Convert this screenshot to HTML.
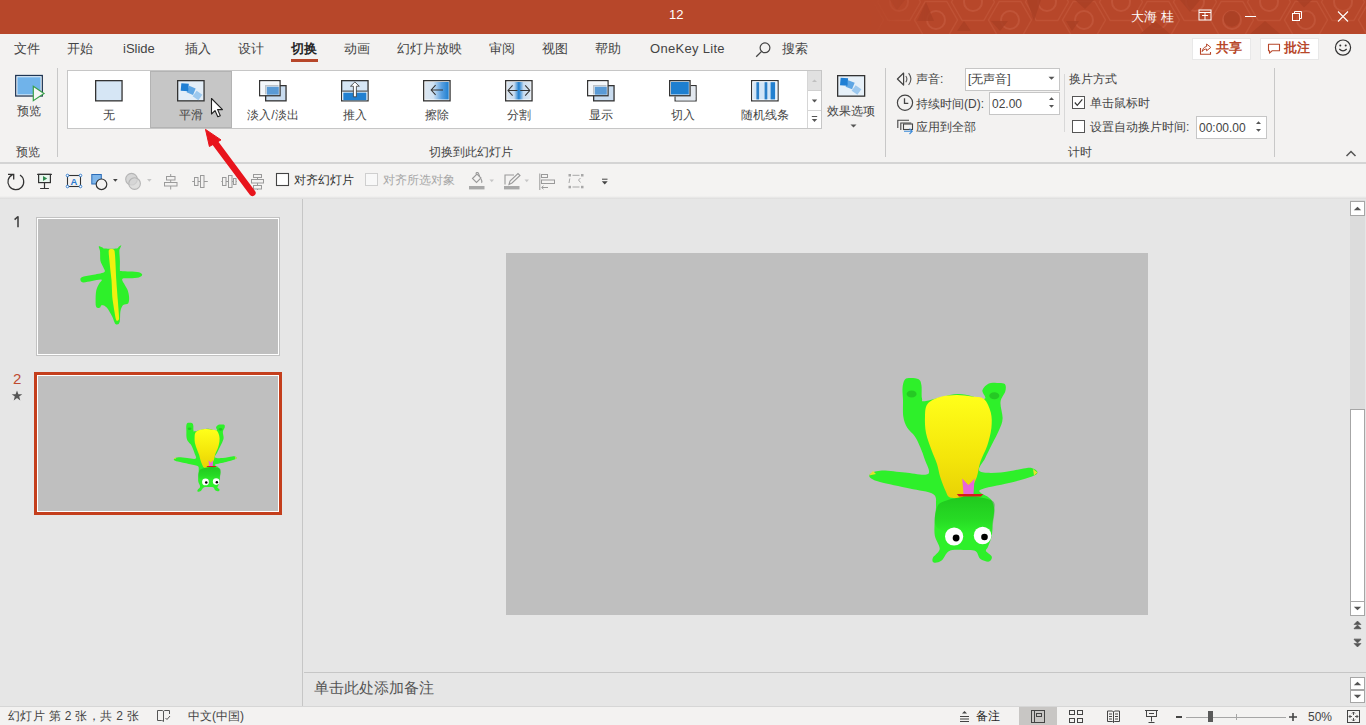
<!DOCTYPE html>
<html><head><meta charset="utf-8">
<style>
*{box-sizing:border-box;margin:0;padding:0}
html,body{width:1366px;height:725px;overflow:hidden;background:#e6e6e6;font-family:"Liberation Sans",sans-serif;color:#262626}
.a{position:absolute}
#title{left:0;top:0;width:1366px;height:34px;background:#b7472a}
#ribbon{left:0;top:34px;width:1366px;height:129px;background:#f3f2f1}
#tb{left:0;top:162px;width:1366px;height:37px;background:#f4f3f2;border-top:2px solid #d4d4d4;border-bottom:1px solid #cfcfcf}
.tab{position:absolute;top:41px;font-size:13px;color:#444;line-height:16px;white-space:nowrap}
.sep{position:absolute;width:1px;background:#c8c8c8}
.glabel{position:absolute;font-size:12px;color:#444;line-height:14px;white-space:nowrap;top:145px !important}
.gi{position:absolute;top:71px;width:82px;height:57px}
.gi .t{position:absolute;left:0;width:100%;top:37px;text-align:center;font-size:12px;color:#444;line-height:14px;white-space:nowrap}
.gi svg{position:absolute;left:27px;top:8px}
.txt{position:absolute;font-size:12px;color:#444;line-height:14px;white-space:nowrap}
</style></head><body>
<div id="title" class="a"></div>
<div id="ribbon" class="a"></div>
<div id="tb" class="a"></div>
<div class="a" style="left:0;top:196px;width:1366px;height:3px;background:linear-gradient(#f4f3f2,#dcdcdc)"></div>

<!-- tabs -->
<div class="tab" style="left:14px">文件</div>
<div class="tab" style="left:67px">开始</div>
<div class="tab" style="left:123px">iSlide</div>
<div class="tab" style="left:185px">插入</div>
<div class="tab" style="left:238px">设计</div>
<div class="tab" style="left:291px;font-weight:bold;color:#262626">切换</div>
<div class="a" style="left:291px;top:59px;width:27px;height:3px;background:#b7472a"></div>
<div class="tab" style="left:344px">动画</div>
<div class="tab" style="left:397px">幻灯片放映</div>
<div class="tab" style="left:489px">审阅</div>
<div class="tab" style="left:542px">视图</div>
<div class="tab" style="left:595px">帮助</div>
<div class="tab" style="left:650px;letter-spacing:0.3px">OneKey Lite</div>
<div class="tab" style="left:782px">搜索</div>

<!-- separators -->
<div class="sep" style="left:57px;top:68px;height:89px"></div>
<div class="sep" style="left:885px;top:68px;height:89px"></div>
<div class="sep" style="left:1274px;top:68px;height:89px"></div>
<div class="sep" style="left:1064px;top:74px;height:58px;background:#d8d8d8"></div>

<!-- group labels -->
<div class="glabel" style="left:16px;top:144px">预览</div>
<div class="glabel" style="left:429px;top:144px">切换到此幻灯片</div>
<div class="glabel" style="left:1068px;top:144px">计时</div>

<!-- gallery -->
<div class="a" style="left:67px;top:70px;width:755px;height:59px;background:#fff;border:1px solid #c6c6c6"></div>


<!-- preview button -->
<svg class="a" style="left:8px;top:70px" width="40" height="34" viewBox="8 70 40 34">
<rect x="15.7" y="75.5" width="26.6" height="20.5" fill="#fff" stroke="#1f3553" stroke-width="1.3"/>
<rect x="17" y="76.8" width="24" height="18" fill="#70b3ea"/>
<rect x="17.2" y="77" width="23.6" height="17.6" fill="none" stroke="#cfe6fa" stroke-width="0.6"/>
<path d="M33.3 86.3 L44 93.5 L33.3 100.7 Z" fill="#f6f6f6" stroke="#3aa14a" stroke-width="1.2" stroke-linejoin="miter"/>
</svg>
<div class="txt" style="left:17px;top:104px">预览</div>

<!-- gallery items -->
<div class="a" style="left:150px;top:71px;width:82px;height:57px;background:#c6c6c6;border:1px solid #b3b3b3"></div>
<div class="gi" style="left:68px"><svg width="28" height="22" viewBox="0 0 28 22" style="left:27px;top:9px"><rect x="0.65" y="0.65" width="26.40" height="20.20" fill="#d6e6f5" stroke="#333" stroke-width="1.3"/></svg><div class="t">无</div></div>
<div class="gi" style="left:150px"><svg width="28" height="22" viewBox="0 0 28 22" style="left:27px;top:9px"><rect x="0.65" y="0.65" width="26.40" height="20.20" fill="#e3eef8" stroke="#333" stroke-width="1.3"/><rect x="17" y="12" width="7" height="7" fill="#9cc8ee" transform="rotate(35 20.5 15.5)"/>
<rect x="10.6" y="6.8" width="7" height="7" fill="#5ea6e4" transform="rotate(22 14 10.3)"/>
<rect x="4" y="3.5" width="7.5" height="7.5" fill="#1f7fd4" transform="rotate(5 7.8 7.3)"/></svg><div class="t">平滑</div></div>
<div class="gi" style="left:232px"><svg width="28" height="22" viewBox="0 0 28 22" style="left:27px;top:9px"><rect x="6.65" y="5.65" width="20.40" height="15.20" fill="#c9dcef" stroke="#333" stroke-width="1.3"/><rect x="0.65" y="0.65" width="20.4" height="15.1" fill="#eef3f8" fill-opacity="0.75" stroke="#333" stroke-width="1.3"/><rect x="1.9" y="1.9" width="17.9" height="12.6" fill="none" stroke="#fff" stroke-width="0.9" opacity="0.7"/><rect x="7.8" y="6.8" width="12" height="7.9" fill="#5a9ad5"/></svg><div class="t">淡入/淡出</div></div>
<div class="gi" style="left:314px"><svg width="28" height="22" viewBox="0 0 28 22" style="left:27px;top:9px"><rect x="0.65" y="0.65" width="26.40" height="20.20" fill="#d6e6f5" stroke="#333" stroke-width="1.3"/><rect x="1.3" y="11.6" width="25.1" height="8.6" fill="#fff"/><rect x="2.3" y="12.6" width="23.1" height="7.6" fill="#2280d0"/><path d="M1.3 11.1 H26.4" stroke="#333" stroke-width="1"/><path d="M12.4 16.8 V6.2 H9.5 L13.9 2 L18.3 6.2 H15.4 V16.8 Z" fill="#fff" stroke="#333" stroke-width="0.8" stroke-linejoin="round"/></svg><div class="t">推入</div></div>
<div class="gi" style="left:396px"><svg width="28" height="22" viewBox="0 0 28 22" style="left:27px;top:9px"><defs><linearGradient id="gw" x1="0" x2="1"><stop offset="0" stop-color="#dce6f0"/><stop offset="0.35" stop-color="#d0e2f3"/><stop offset="0.7" stop-color="#5aa0e0"/><stop offset="1" stop-color="#1e7fd0"/></linearGradient></defs><rect x="0.65" y="0.65" width="26.40" height="20.20" fill="#fff" stroke="#333" stroke-width="1.3"/><rect x="2" y="2" width="23.7" height="17.5" fill="url(#gw)"/><path d="M20 10 H8.2 M12.6 5.2 L8.2 10 L12.6 14.8" fill="none" stroke="#333" stroke-width="1.05"/></svg><div class="t">擦除</div></div>
<div class="gi" style="left:478px"><svg width="28" height="22" viewBox="0 0 28 22" style="left:27px;top:9px"><defs><linearGradient id="gs" x1="0" x2="1"><stop offset="0" stop-color="#dce6f0"/><stop offset="0.3" stop-color="#c8dcf0"/><stop offset="0.5" stop-color="#1e7fd0"/><stop offset="0.7" stop-color="#c8dcf0"/><stop offset="1" stop-color="#dce6f0"/></linearGradient></defs><rect x="0.65" y="0.65" width="26.40" height="20.20" fill="#fff" stroke="#333" stroke-width="1.3"/><rect x="2" y="2" width="23.7" height="17.5" fill="url(#gs)"/><path d="M3 10.5 H12.5 M15.2 10.5 H24.8 M7.6 5.3 L3 10.5 L7.6 15.7 M20.2 5.3 L24.8 10.5 L20.2 15.7" fill="none" stroke="#333" stroke-width="1.05"/></svg><div class="t">分割</div></div>
<div class="gi" style="left:560px"><svg width="28" height="22" viewBox="0 0 28 22" style="left:27px;top:9px"><rect x="6.65" y="5.65" width="20.40" height="15.20" fill="#c9dcef" stroke="#333" stroke-width="1.3"/><rect x="0.65" y="0.65" width="20.4" height="15.1" fill="#eef3f8" fill-opacity="0.75" stroke="#333" stroke-width="1.3"/><rect x="1.9" y="1.9" width="17.9" height="12.6" fill="none" stroke="#fff" stroke-width="0.9" opacity="0.7"/><rect x="7.8" y="6.8" width="12" height="7.9" fill="#5a9ad5"/></svg><div class="t">显示</div></div>
<div class="gi" style="left:642px"><svg width="28" height="22" viewBox="0 0 28 22" style="left:27px;top:9px"><path d="M6.1 16.4 V21 H27.1 V5.6 H21.7" fill="#e6ebf0" stroke="#333" stroke-width="1.2"/><rect x="6.8" y="16.4" width="19.6" height="3.9" fill="#e2e8ef"/><rect x="21.7" y="6.3" width="4.7" height="10.5" fill="#e2e8ef"/><rect x="0.65" y="0.65" width="20.40" height="15.10" fill="#fff" stroke="#333" stroke-width="1.3"/><rect x="1.9" y="1.9" width="17.9" height="12.6" fill="#1e7fd0"/></svg><div class="t">切入</div></div>
<div class="gi" style="left:724px"><svg width="28" height="22" viewBox="0 0 28 22" style="left:27px;top:9px"><rect x="0.65" y="0.65" width="26.40" height="20.20" fill="#d6e6f5" stroke="#333" stroke-width="1.3"/><rect x="1.3" y="1.3" width="25.1" height="18.9" fill="#fff"/><rect x="2.2" y="2.2" width="23.3" height="17.2" fill="#d3e6f7"/><rect x="5.4" y="2.2" width="2.7" height="17.2" fill="#2a7fc8"/><rect x="13.6" y="2.2" width="2.7" height="17.2" fill="#2a7fc8"/><rect x="19.6" y="2.2" width="4.4" height="17.2" fill="#2280d0"/></svg><div class="t">随机线条</div></div>

<!-- gallery scroll -->
<div class="a" style="left:807px;top:71px;width:14px;height:57px;background:#fff;border-left:1px solid #d6d6d6"></div>
<div class="a" style="left:808px;top:71px;width:13px;height:20px;background:#e1e1e1;border-bottom:1px solid #d0d0d0"></div>
<div class="a" style="left:808px;top:110px;width:13px;height:1px;background:#d6d6d6"></div>
<svg class="a" style="left:808px;top:71px" width="13" height="57" viewBox="0 0 13 57">
<path d="M4 11 L9 11 L6.5 8.5Z" fill="#c0c0c0"/>
<path d="M3.8 28.5 L9.2 28.5 L6.5 31.5Z" fill="#555"/>
<rect x="3.8" y="45" width="5.4" height="1" fill="#555"/>
<path d="M3.8 48 L9.2 48 L6.5 51Z" fill="#555"/>
</svg>

<!-- effect options -->
<svg class="a" style="left:836px;top:74px" width="30" height="24" viewBox="0 0 30 24">
<rect x="1.65" y="1.65" width="27" height="20.5" fill="#e6f0f8" stroke="#333" stroke-width="1.3"/>
<rect x="17" y="12.5" width="7" height="7" fill="#9cc8ee" transform="rotate(35 20.5 16)"/>
<rect x="10.6" y="7.2" width="7" height="7" fill="#5ea6e4" transform="rotate(22 14 10.8)"/>
<rect x="4.3" y="4" width="7.5" height="7.5" fill="#1f7fd4" transform="rotate(5 8 7.8)"/>
</svg>
<div class="txt" style="left:827px;top:104px">效果选项</div>
<svg class="a" style="left:849px;top:123px" width="9" height="6" viewBox="0 0 9 6"><path d="M1.5 1.5 H7.5 L4.5 4.5Z" fill="#555"/></svg>

<!-- timing -->
<svg class="a" style="left:890px;top:68px" width="26" height="72" viewBox="890 68 26 72">
<path d="M903.6 73 L897.4 79 L903.6 85 Z" fill="none" stroke="#444" stroke-width="1.2" stroke-linejoin="round"/>
<path d="M905.8 76 Q908 79 905.8 82.2" fill="none" stroke="#555" stroke-width="1.1"/>
<path d="M908.6 73.2 Q913.2 79 908.6 85" fill="none" stroke="#555" stroke-width="1.1"/>
<circle cx="905" cy="102.8" r="7.6" fill="none" stroke="#444" stroke-width="1.2"/>
<path d="M904.5 98.2 V103.4 H908.3" fill="none" stroke="#444" stroke-width="1.3"/>
<path d="M897.8 128 V120.2 H909" fill="none" stroke="#444" stroke-width="1.1"/>
<path d="M900.8 130 V123 H911.3" fill="none" stroke="#444" stroke-width="1.1"/>
<rect x="903.5" y="124" width="9" height="5.5" fill="none" stroke="#444" stroke-width="1.1"/>
<path d="M904 131.3 H912 M909.5 128.6 L912.2 131.3 L909.5 134" fill="none" stroke="#3b8ad8" stroke-width="1.1"/>
</svg>
<div class="txt" style="left:916px;top:72px">声音:</div>
<div class="a" style="left:965px;top:68px;width:95px;height:23px;background:#fff;border:1px solid #c6c6c6"></div>
<div class="txt" style="left:968px;top:72px">[无声音]</div>
<svg class="a" style="left:1048px;top:76px" width="8" height="5" viewBox="0 0 8 5"><path d="M0.5 0.8 H6.5 L3.5 3.8Z" fill="#555"/></svg>


<div class="txt" style="left:916px;top:97px">持续时间(D):</div>
<div class="a" style="left:989px;top:92px;width:71px;height:23px;background:#fff;border:1px solid #c6c6c6"></div>
<div class="txt" style="left:992px;top:97px">02.00</div>
<svg class="a" style="left:1047px;top:94px" width="10" height="18" viewBox="0 0 10 18"><path d="M2 6 H7 L4.5 3.3Z M2 11 H7 L4.5 13.7Z" fill="#555"/></svg>


<div class="txt" style="left:916px;top:120px">应用到全部</div>

<div class="txt" style="left:1069px;top:72px">换片方式</div>
<div class="a" style="left:1072px;top:96px;width:13px;height:13px;background:#fff;border:1px solid #555"></div>
<svg class="a" style="left:1072px;top:96px" width="13" height="13" viewBox="0 0 13 13"><path d="M2.8 6.5 L5.3 9.3 L10.3 3.3" fill="none" stroke="#333" stroke-width="1.2"/></svg>
<div class="txt" style="left:1090px;top:96px">单击鼠标时</div>
<div class="a" style="left:1072px;top:120px;width:13px;height:13px;background:#fff;border:1px solid #555"></div>
<div class="txt" style="left:1090px;top:120px">设置自动换片时间:</div>
<div class="a" style="left:1196px;top:116px;width:71px;height:23px;background:#fff;border:1px solid #c6c6c6"></div>
<div class="txt" style="left:1199px;top:121px">00:00.00</div>
<svg class="a" style="left:1254px;top:118px" width="10" height="18" viewBox="0 0 10 18"><path d="M2 6 H7 L4.5 3.3Z M2 11 H7 L4.5 13.7Z" fill="#555"/></svg>

<svg class="a" style="left:1345px;top:149px" width="12" height="9" viewBox="0 0 12 9"><path d="M1.5 7 L6 2.5 L10.5 7" fill="none" stroke="#555" stroke-width="1.5"/></svg>

<!-- title pattern -->
<svg class="a" style="left:870px;top:0" width="496" height="34" viewBox="870 0 496 34"><defs><linearGradient id="fade" x1="0" x2="1"><stop offset="0" stop-color="#fff" stop-opacity="0"/><stop offset="0.12" stop-color="#fff" stop-opacity="1"/></linearGradient><mask id="fm"><rect x="870" y="0" width="496" height="34" fill="url(#fade)"/></mask></defs><g mask="url(#fm)" opacity="0.9"><circle cx="862.0" cy="20" r="9" fill="none" stroke="#c2563a" stroke-width="2"/><polygon points="883.5,20.0 872.8,38.6 851.2,38.6 840.5,20.0 851.2,1.4 872.8,1.4" fill="none" stroke="#c2563a" stroke-width="1.5" opacity="0.8"/><circle cx="899.0" cy="2" r="9" fill="none" stroke="#c2563a" stroke-width="2"/><polygon points="920.5,2.0 909.8,20.6 888.2,20.6 877.5,2.0 888.2,-16.6 909.8,-16.6" fill="none" stroke="#c2563a" stroke-width="1.5" opacity="0.8"/><circle cx="936.0" cy="20" r="9" fill="none" stroke="#c2563a" stroke-width="2"/><polygon points="957.5,20.0 946.8,38.6 925.2,38.6 914.5,20.0 925.2,1.4 946.8,1.4" fill="none" stroke="#c2563a" stroke-width="1.5" opacity="0.8"/><circle cx="973.0" cy="2" r="9" fill="none" stroke="#c2563a" stroke-width="2"/><polygon points="994.5,2.0 983.8,20.6 962.2,20.6 951.5,2.0 962.2,-16.6 983.8,-16.6" fill="none" stroke="#c2563a" stroke-width="1.5" opacity="0.8"/><circle cx="1010.0" cy="20" r="9" fill="none" stroke="#c2563a" stroke-width="2"/><polygon points="1031.5,20.0 1020.8,38.6 999.2,38.6 988.5,20.0 999.2,1.4 1020.8,1.4" fill="none" stroke="#c2563a" stroke-width="1.5" opacity="0.8"/><circle cx="1047.0" cy="2" r="9" fill="none" stroke="#c2563a" stroke-width="2"/><polygon points="1068.5,2.0 1057.8,20.6 1036.2,20.6 1025.5,2.0 1036.2,-16.6 1057.8,-16.6" fill="none" stroke="#c2563a" stroke-width="1.5" opacity="0.8"/><circle cx="1084.0" cy="20" r="9" fill="none" stroke="#c2563a" stroke-width="2"/><polygon points="1105.5,20.0 1094.8,38.6 1073.2,38.6 1062.5,20.0 1073.2,1.4 1094.8,1.4" fill="none" stroke="#c2563a" stroke-width="1.5" opacity="0.8"/><circle cx="1121.0" cy="2" r="9" fill="none" stroke="#c2563a" stroke-width="2"/><polygon points="1142.5,2.0 1131.8,20.6 1110.2,20.6 1099.5,2.0 1110.2,-16.6 1131.8,-16.6" fill="none" stroke="#c2563a" stroke-width="1.5" opacity="0.8"/><circle cx="1158.0" cy="20" r="9" fill="none" stroke="#c2563a" stroke-width="2"/><polygon points="1179.5,20.0 1168.8,38.6 1147.2,38.6 1136.5,20.0 1147.2,1.4 1168.8,1.4" fill="none" stroke="#c2563a" stroke-width="1.5" opacity="0.8"/><circle cx="1195.0" cy="2" r="9" fill="none" stroke="#c2563a" stroke-width="2"/><polygon points="1216.5,2.0 1205.8,20.6 1184.2,20.6 1173.5,2.0 1184.2,-16.6 1205.8,-16.6" fill="none" stroke="#c2563a" stroke-width="1.5" opacity="0.8"/><circle cx="1232.0" cy="20" r="9" fill="none" stroke="#c2563a" stroke-width="2"/><polygon points="1253.5,20.0 1242.8,38.6 1221.2,38.6 1210.5,20.0 1221.2,1.4 1242.8,1.4" fill="none" stroke="#c2563a" stroke-width="1.5" opacity="0.8"/><circle cx="1269.0" cy="2" r="9" fill="none" stroke="#c2563a" stroke-width="2"/><polygon points="1290.5,2.0 1279.8,20.6 1258.2,20.6 1247.5,2.0 1258.2,-16.6 1279.8,-16.6" fill="none" stroke="#c2563a" stroke-width="1.5" opacity="0.8"/><circle cx="1306.0" cy="20" r="9" fill="none" stroke="#c2563a" stroke-width="2"/><polygon points="1327.5,20.0 1316.8,38.6 1295.2,38.6 1284.5,20.0 1295.2,1.4 1316.8,1.4" fill="none" stroke="#c2563a" stroke-width="1.5" opacity="0.8"/><circle cx="1343.0" cy="2" r="9" fill="none" stroke="#c2563a" stroke-width="2"/><polygon points="1364.5,2.0 1353.8,20.6 1332.2,20.6 1321.5,2.0 1332.2,-16.6 1353.8,-16.6" fill="none" stroke="#c2563a" stroke-width="1.5" opacity="0.8"/><circle cx="1380.0" cy="20" r="9" fill="none" stroke="#c2563a" stroke-width="2"/><polygon points="1401.5,20.0 1390.8,38.6 1369.2,38.6 1358.5,20.0 1369.2,1.4 1390.8,1.4" fill="none" stroke="#c2563a" stroke-width="1.5" opacity="0.8"/><circle cx="1417.0" cy="2" r="9" fill="none" stroke="#c2563a" stroke-width="2"/><polygon points="1438.5,2.0 1427.8,20.6 1406.2,20.6 1395.5,2.0 1406.2,-16.6 1427.8,-16.6" fill="none" stroke="#c2563a" stroke-width="1.5" opacity="0.8"/><circle cx="1454.0" cy="20" r="9" fill="none" stroke="#c2563a" stroke-width="2"/><polygon points="1475.5,20.0 1464.8,38.6 1443.2,38.6 1432.5,20.0 1443.2,1.4 1464.8,1.4" fill="none" stroke="#c2563a" stroke-width="1.5" opacity="0.8"/><circle cx="1491.0" cy="2" r="9" fill="none" stroke="#c2563a" stroke-width="2"/><polygon points="1512.5,2.0 1501.8,20.6 1480.2,20.6 1469.5,2.0 1480.2,-16.6 1501.8,-16.6" fill="none" stroke="#c2563a" stroke-width="1.5" opacity="0.8"/><polygon points="917,21 926,2 934,21" fill="#a83f24" opacity="0.8"/><polygon points="957,31 964,21 971,31" fill="#a83f24" opacity="0.8"/><polygon points="991,21 1008,21 1000,31" fill="#a83f24" opacity="0.8"/><polygon points="1027,0 1041,0 1034,21" fill="#a83f24" opacity="0.8"/><polygon points="1066,21 1079,21 1072,31" fill="#a83f24" opacity="0.8"/><polygon points="1075,0 1094,0 1085,9" fill="#a83f24" opacity="0.8"/><polygon points="1297,0 1312,0 1304,7.5" fill="#a83f24" opacity="0.8"/><polygon points="1140,34 1155,21 1170,34" fill="#a83f24" opacity="0.8"/><polygon points="1180,0 1200,0 1190,12" fill="#a83f24" opacity="0.8"/><polygon points="1250,34 1265,21 1280,34" fill="#a83f24" opacity="0.8"/><polygon points="890,0 905,0 897,10" fill="#a83f24" opacity="0.8"/><circle cx="1231.8" cy="18.7" r="8" fill="#a83f24" opacity="0.8"/></g></svg>
<!-- title bar content -->
<div class="a" style="left:669px;top:7px;font-size:13px;color:#fff;line-height:16px">12</div>
<div class="a" style="left:1131px;top:9px;font-size:13px;color:#fff;line-height:16px">大海 桂</div>
<svg class="a" style="left:1198px;top:9px" width="14" height="12" viewBox="0 0 14 12"><rect x="1" y="1" width="12" height="10" fill="none" stroke="#fff" stroke-width="1"/><path d="M1 3.5 H13 M4 6.5 H10 M7 3.5 V11" fill="none" stroke="#fff" stroke-width="1"/></svg>
<div class="a" style="left:1245px;top:16px;width:11px;height:1px;background:#fff"></div>
<svg class="a" style="left:1291px;top:10px" width="12" height="12" viewBox="0 0 12 12"><rect x="1.5" y="3.5" width="7" height="7" fill="none" stroke="#fff" stroke-width="1"/><path d="M3.5 3.5 V1.5 H10.5 V8.5 H8.5" fill="none" stroke="#fff" stroke-width="1"/></svg>
<svg class="a" style="left:1336px;top:10px" width="14" height="14" viewBox="0 0 14 14"><path d="M2 1.5 L12 11.5 M12 1.5 L2 11.5" stroke="#fff" stroke-width="1.1"/></svg>

<!-- share / comments -->
<div class="a" style="left:1192px;top:38px;width:59px;height:22px;background:#fff;border:1px solid #e8e8e8"></div>
<svg class="a" style="left:1198px;top:41px" width="16" height="16" viewBox="0 0 16 16"><path d="M8.6 3 L12.8 6.4 L8.6 9.8 V8 C6.6 8 5.2 8.8 4.2 10.6 C4.5 7.8 6 6 8.6 5.5Z" fill="none" stroke="#b7472a" stroke-width="1" stroke-linejoin="round"/><path d="M2.5 7 V13.3 H12.5 V11" fill="none" stroke="#b7472a" stroke-width="1.1"/></svg>
<div class="a" style="left:1216px;top:40px;font-size:13px;font-weight:bold;color:#b7472a;line-height:16px">共享</div>
<div class="a" style="left:1260px;top:38px;width:59px;height:22px;background:#fff;border:1px solid #e8e8e8"></div>
<svg class="a" style="left:1267px;top:43px" width="14" height="12" viewBox="0 0 14 12"><path d="M1.5 1.2 H12.5 V7.8 H5 L2.5 10.2 V7.8 H1.5 Z" fill="none" stroke="#b7472a" stroke-width="1.1" stroke-linejoin="round"/></svg>
<div class="a" style="left:1284px;top:40px;font-size:13px;font-weight:bold;color:#b7472a;line-height:16px">批注</div>
<svg class="a" style="left:1333px;top:38px" width="20" height="20" viewBox="0 0 20 20"><circle cx="10" cy="9.6" r="7.6" fill="none" stroke="#333" stroke-width="1.2"/><circle cx="7.3" cy="7.6" r="1" fill="#333"/><circle cx="12.7" cy="7.6" r="1" fill="#333"/><path d="M6.3 11 Q10 14.6 13.7 11" fill="none" stroke="#333" stroke-width="1.2"/></svg>

<!-- search icon -->
<svg class="a" style="left:752px;top:40px" width="22" height="20" viewBox="752 40 22 20"><circle cx="765" cy="47.8" r="4.9" fill="none" stroke="#444" stroke-width="1.2"/><path d="M761.6 51.4 L756.2 56.8" stroke="#444" stroke-width="1.3"/></svg>

<!-- toolbar -->
<svg class="a" style="left:0;top:163px" width="620" height="36" viewBox="0 163 620 36">
<!-- rotate -->
<path d="M20 175.1 A7.9 7.9 0 1 1 12.6 174.6" fill="none" stroke="#333" stroke-width="1.2"/>
<path d="M8 174.4 H13.7 V179.6" fill="none" stroke="#333" stroke-width="1.3"/>
<!-- present -->
<path d="M37.1 174.4 H51.9" stroke="#333" stroke-width="1.2"/>
<rect x="38.6" y="174.4" width="11.8" height="8.2" fill="#e9f6ee" stroke="#333" stroke-width="1.2"/>
<path d="M43 176 L47.2 178.5 L43 181Z" fill="#2e8a4e"/>
<path d="M44.5 182.6 V188.4 M40.1 188.5 H48.9" fill="none" stroke="#333" stroke-width="1.2"/>
<!-- text box -->
<rect x="67.5" y="175.5" width="13" height="11" fill="none" stroke="#333" stroke-width="1.1"/>
<circle cx="67.5" cy="175.5" r="1.3" fill="#fff" stroke="#2b7bd0" stroke-width="0.9"/>
<circle cx="80.5" cy="175.5" r="1.3" fill="#fff" stroke="#2b7bd0" stroke-width="0.9"/>
<circle cx="67.5" cy="186.5" r="1.3" fill="#fff" stroke="#2b7bd0" stroke-width="0.9"/>
<circle cx="80.5" cy="186.5" r="1.3" fill="#fff" stroke="#2b7bd0" stroke-width="0.9"/>
<text x="74" y="184.6" font-size="9.5" font-weight="bold" fill="#2b7bd0" text-anchor="middle" font-family="Liberation Sans">A</text>
<!-- shape -->
<rect x="91.8" y="174.5" width="9.5" height="9.5" fill="#7fb6ea" stroke="#2b6cb8" stroke-width="1"/>
<circle cx="101.5" cy="184.3" r="5.3" fill="#f3f2f1" stroke="#333" stroke-width="1.2"/>
<path d="M113 179 H117.7 L115.35 181.8Z" fill="#444"/>
<!-- merge -->
<circle cx="131.5" cy="179.2" r="5.8" fill="#d6d6d6" stroke="#b5b5b5" stroke-width="1.1"/>
<circle cx="134.6" cy="183.6" r="5.8" fill="#d6d6d6" stroke="#b5b5b5" stroke-width="1.1" fill-opacity="0.7"/>
<path d="M147 179 H151.7 L149.35 181.8Z" fill="#c6c6c6"/>
<!-- align center -->
<g fill="#f3f2f1" stroke="#9a9a9a" stroke-width="1">
<path d="M170.7 174 V189.5"/>
<rect x="166.5" y="176.5" width="8.5" height="3.5"/>
<rect x="164.5" y="182.5" width="12.5" height="3.5"/>
<path d="M192.2 181.5 H207.8"/>
<rect x="194.5" y="177.5" width="3.5" height="8"/>
<rect x="200.5" y="175.5" width="3.5" height="12"/>
<path d="M221.3 181.5 H236.7"/>
<rect x="222.5" y="177.5" width="3.5" height="8"/>
<rect x="228.5" y="175.5" width="3.5" height="12"/>
<rect x="233.5" y="178.5" width="2.5" height="6"/>
<path d="M257.5 174 V190"/>
<rect x="253.5" y="174.5" width="8" height="3"/>
<rect x="251.5" y="179.5" width="12" height="3.5"/>
<rect x="253.5" y="185.5" width="8" height="3.5"/>
</g>
<!-- checkbox -->
<rect x="276.5" y="173.5" width="12" height="12" fill="#fff" stroke="#444" stroke-width="1.1"/>
<rect x="365.5" y="173.5" width="12" height="12" fill="#f8f8f8" stroke="#cfcfcf" stroke-width="1"/>
<!-- fill -->
<g fill="none" stroke="#9a9a9a" stroke-width="1.1">
<path d="M472.5 178.5 L477 174 L481 178 L476.5 182.5Z"/>
<path d="M476.5 174.5 C475 172.5 477.8 171.5 478.6 173.6 L479.5 176.2"/>
<path d="M481 179 C481.8 180.5 482.6 182 481.4 182.8"/>
</g>
<rect x="469" y="186" width="15.5" height="3.4" fill="#a8a8a8"/>
<path d="M489.5 179.5 H494 L491.75 182.2Z" fill="#c6c6c6"/>
<!-- pen -->
<g fill="none" stroke="#9a9a9a" stroke-width="1.1">
<path d="M505 184.5 V175 H514"/>
<path d="M509 184.5 L510 181 L518 173.5 L520 175.5 L512 183 Z"/>
</g>
<rect x="504" y="186" width="15.5" height="3.4" fill="#a8a8a8"/>
<path d="M524.5 179.5 H529 L526.75 182.2Z" fill="#c6c6c6"/>
<!-- align left -->
<g fill="none" stroke="#9a9a9a" stroke-width="1">
<path d="M539.8 173.5 V190"/>
<rect x="541.5" y="174.5" width="6" height="3"/>
<rect x="541.5" y="180" width="13" height="3.5"/>
<path d="M542 187.5 H548 M543.5 185.8 L541.6 187.5 L543.5 189.2"/>
</g>
<!-- selection -->
<g fill="#a8a8a8">
<rect x="568.5" y="174" width="2.5" height="2.5"/><rect x="581" y="174" width="2.5" height="2.5"/>
<rect x="568.5" y="185.8" width="2.5" height="2.5"/><rect x="581" y="185.8" width="2.5" height="2.5"/>
</g>
<g fill="none" stroke="#a8a8a8" stroke-width="1">
<path d="M572.5 175.3 H579.5 M572.5 187 H579.5 M569.8 178.5 L569 183 M580.5 178 L578.5 180 L580.5 182.5"/>
</g>
<!-- overflow -->
<path d="M602 179.2 H607.5" stroke="#444" stroke-width="1"/>
<path d="M601.8 181.3 H607.7 L604.75 184.6Z" fill="#444"/>
</svg>
<div class="txt" style="left:294px;top:173px;color:#333">对齐幻灯片</div>
<div class="txt" style="left:383px;top:173px;color:#a6a6a6">对齐所选对象</div>

<!-- left panel -->
<div class="a" style="left:302px;top:199px;width:1px;height:507px;background:#c6c6c6"></div>
<svg class="a" style="left:10px;top:212px" width="14" height="18" viewBox="10 212 14 18"><path d="M18 216.2 V227.2 M18 216.5 L14.6 219.6" fill="none" stroke="#3a3a3a" stroke-width="1.5"/></svg>
<div class="a" style="left:36px;top:217px;width:244px;height:139px;background:#bfbfbf;border:1px solid #c2c2c2"></div>
<div class="a" style="left:37px;top:218px;width:242px;height:137px;border:1px solid #fff"></div>
<div class="a" style="left:13px;top:370px;font-size:15px;color:#bf4a30;line-height:17px">2</div>
<svg class="a" style="left:11px;top:390px" width="12" height="11" viewBox="0 0 12 11"><path d="M6 0.5 L7.4 4.2 L11.3 4.2 L8.2 6.6 L9.3 10.4 L6 8.1 L2.7 10.4 L3.8 6.6 L0.7 4.2 L4.6 4.2Z" fill="#555"/></svg>
<div class="a" style="left:34px;top:372px;width:248px;height:143px;border:3px solid #c43e1c;background:#bfbfbf"></div>
<div class="a" style="left:37px;top:375px;width:242px;height:137px;border:1px solid #fff"></div>

<!-- main slide -->
<div class="a" style="left:506px;top:253px;width:642px;height:362px;background:#bfbfbf"></div>

<!-- scrollbar -->
<div class="a" style="left:1350px;top:200px;width:15px;height:416px;background:#dcdcdc"></div>
<div class="a" style="left:1350px;top:201px;width:15px;height:15px;background:#fff;border:1px solid #a6a6a6"></div>
<svg class="a" style="left:1350px;top:201px" width="15" height="15" viewBox="0 0 15 15"><path d="M3.8 9.3 H11.2 L7.5 5.7Z" fill="#555"/></svg>
<div class="a" style="left:1350px;top:409px;width:15px;height:193px;background:#fff;border:1px solid #a6a6a6"></div>
<div class="a" style="left:1350px;top:601px;width:15px;height:15px;background:#fff;border:1px solid #a6a6a6"></div>
<svg class="a" style="left:1350px;top:601px" width="15" height="15" viewBox="0 0 15 15"><path d="M3.8 5.7 H11.2 L7.5 9.3Z" fill="#555"/></svg>
<svg class="a" style="left:1350px;top:618px" width="15" height="32" viewBox="0 0 15 32"><path d="M4 6.5 L7.5 3 L11 6.5Z M4 10.5 L7.5 7 L11 10.5Z M4 10.8 H11" fill="#555" stroke="#555" stroke-width="0.6"/><path d="M4 21 H11 M4 21.5 L7.5 25 L11 21.5Z M4 25.5 L7.5 29 L11 25.5Z" fill="#555" stroke="#555" stroke-width="0.6"/></svg>

<!-- notes -->
<div class="a" style="left:304px;top:672px;width:1062px;height:1px;background:#c6c6c6"></div>
<div class="a" style="left:314px;top:680px;font-size:14.7px;color:#555;line-height:17px">单击此处添加备注</div>
<div class="a" style="left:1350px;top:677px;width:15px;height:13px;background:#fff;border:1px solid #a6a6a6"></div>
<svg class="a" style="left:1350px;top:677px" width="15" height="13" viewBox="0 0 15 13"><path d="M3.8 8.3 H11.2 L7.5 4.7Z" fill="#555"/></svg>
<div class="a" style="left:1350px;top:690px;width:15px;height:13px;background:#fff;border:1px solid #a6a6a6"></div>
<svg class="a" style="left:1350px;top:690px" width="15" height="13" viewBox="0 0 15 13"><path d="M3.8 4.7 H11.2 L7.5 8.3Z" fill="#555"/></svg>

<!-- status bar -->
<div class="a" style="left:0;top:706px;width:1366px;height:19px;background:#f3f2f1;border-top:1px solid #d6d6d6"></div>
<div class="a" style="left:8px;top:709px;font-size:12px;color:#444;line-height:15px;white-space:nowrap;letter-spacing:0.35px">幻灯片 第 2 张，共 2 张</div>
<svg class="a" style="left:156px;top:709px" width="16" height="14" viewBox="0 0 16 14"><path d="M1.5 1.5 H6 C7 1.5 7.5 2 7.5 3 V12.5 C7 12 6.5 11.5 5.5 11.5 H1.5Z M7.5 3 C7.5 2 8 1.5 9 1.5 H13.5 V5" fill="none" stroke="#555" stroke-width="1"/><path d="M9.5 9 L11 10.5 L14 7" fill="none" stroke="#555" stroke-width="1"/></svg>
<div class="a" style="left:188px;top:709px;font-size:12px;color:#444;line-height:15px">中文(中国)</div>
<svg class="a" style="left:958px;top:709px" width="14" height="14" viewBox="0 0 14 14"><path d="M4 4.5 L6.5 2 L9 4.5Z" fill="#444"/><path d="M2 7.5 H11 M2 10 H11 M2 12.5 H11" stroke="#444" stroke-width="1"/></svg>
<div class="a" style="left:976px;top:709px;font-size:12px;color:#262626;line-height:15px">备注</div>
<div class="a" style="left:1019px;top:707px;width:38px;height:18px;background:#c8c6c4"></div>
<svg class="a" style="left:1030px;top:709px" width="16" height="15" viewBox="0 0 16 15"><rect x="1.5" y="1.5" width="13" height="12" fill="none" stroke="#444" stroke-width="1"/><path d="M4.5 1.5 V13.5 H14.5" fill="none" stroke="#444" stroke-width="1"/><rect x="6.5" y="4.5" width="5" height="3" fill="none" stroke="#444" stroke-width="1"/></svg>
<svg class="a" style="left:1068px;top:709px" width="16" height="15" viewBox="0 0 16 15"><g fill="none" stroke="#444" stroke-width="1"><rect x="1.5" y="1.5" width="5" height="4"/><rect x="9.5" y="1.5" width="5" height="4"/><rect x="1.5" y="9.5" width="5" height="4"/><rect x="9.5" y="9.5" width="5" height="4"/></g></svg>
<svg class="a" style="left:1106px;top:709px" width="16" height="15" viewBox="0 0 16 15"><g fill="none" stroke="#444" stroke-width="1"><path d="M1.5 2 H6.5 L7.5 3 L8.5 2 H13.5 V12.5 H8.5 L7.5 13.5 L6.5 12.5 H1.5Z M7.5 3 V13.5"/><path d="M3 5 H6 M3 7.5 H6 M3 10 H6 M9 5 H12 M9 7.5 H12 M9 10 H12"/></g></svg>
<svg class="a" style="left:1144px;top:709px" width="16" height="15" viewBox="0 0 16 15"><g fill="none" stroke="#444" stroke-width="1"><path d="M1 1.5 H14"/><rect x="2.5" y="1.5" width="10" height="6"/><path d="M7.5 7.5 V12.5 M4.5 13.5 H10.5"/><path d="M5 4.5 H10"/></g></svg>
<div class="a" style="left:1176px;top:716px;width:6px;height:2px;background:#444"></div>
<div class="a" style="left:1186px;top:717px;width:100px;height:1px;background:#a6a6a6"></div>
<div class="a" style="left:1236px;top:714px;width:1px;height:6px;background:#a6a6a6"></div>
<div class="a" style="left:1208px;top:711px;width:5px;height:11px;background:#5a5a5a"></div>
<svg class="a" style="left:1288px;top:712px" width="10" height="10" viewBox="0 0 10 10"><path d="M1 5 H9 M5 1 V9" stroke="#444" stroke-width="1.6"/></svg>
<div class="a" style="left:1308px;top:710px;font-size:12px;color:#444;line-height:15px">50%</div>
<svg class="a" style="left:1347px;top:709px" width="14" height="15" viewBox="0 0 14 15"><rect x="0.5" y="1.5" width="12" height="12" fill="none" stroke="#444" stroke-width="1"/><path d="M6.5 3 V6 M5 4.5 L6.5 3 L8 4.5 M6.5 12 V9 M5 10.5 L6.5 12 L8 10.5 M2 7.5 H5 M3.5 6 L2 7.5 L3.5 9 M11 7.5 H8 M9.5 6 L11 7.5 L9.5 9" fill="none" stroke="#444" stroke-width="0.9"/></svg>


<!-- main frog -->
<svg class="a" style="left:0;top:0" width="1366" height="725" viewBox="0 0 1366 725">
<defs>
<radialGradient id="gg" cx="0.5" cy="0.4" r="0.7"><stop offset="0" stop-color="#3ef03a"/><stop offset="0.7" stop-color="#2bdc28"/><stop offset="1" stop-color="#1fb21f"/></radialGradient>
<linearGradient id="yy" x1="0" y1="0" x2="0" y2="1"><stop offset="0" stop-color="#ffff1a"/><stop offset="0.6" stop-color="#f4e60a"/><stop offset="1" stop-color="#e8d205"/></linearGradient>
<linearGradient id="hg" x1="0" y1="0" x2="0" y2="1"><stop offset="0" stop-color="#14a814" stop-opacity="0.55"/><stop offset="0.6" stop-color="#18b018" stop-opacity="0.35"/><stop offset="1" stop-color="#18b018" stop-opacity="0"/></linearGradient>
<linearGradient id="hh" x1="0" y1="0" x2="0" y2="1"><stop offset="0" stop-color="#1ec81e"/><stop offset="0.5" stop-color="#2ad826"/><stop offset="1" stop-color="#38e632"/></linearGradient>
</defs>
<g id="frog">
<path d="M904.4 380.3 C905.4 378.5 906.4 378.2 908.8 378.0 C911.2 377.8 916.6 377.9 918.7 379.2 C920.8 380.5 921.0 382.6 921.5 385.8 C922.0 389.0 921.2 396.0 922.0 398.5 C922.8 401.0 920.0 401.8 926.0 401.0 C932.0 400.2 948.3 394.3 958.0 394.0 C967.7 393.7 979.9 399.6 984.0 399.0 C988.1 398.4 981.6 392.8 982.4 390.2 C983.2 387.6 986.4 384.8 988.8 383.6 C991.2 382.4 994.3 382.9 997.0 383.0 C999.7 383.1 1003.4 382.7 1004.8 384.1 C1006.2 385.5 1006.0 388.3 1005.3 391.3 C1004.6 394.3 1001.0 397.5 1000.5 402.0 C1000.0 406.5 1002.9 413.8 1002.6 418.5 C1002.4 423.2 1000.8 425.9 999.0 430.2 C997.2 434.5 994.3 439.6 992.0 444.3 C989.7 449.0 987.1 453.9 985.0 458.4 C982.9 462.8 976.9 468.6 979.5 471.0 C982.1 473.4 993.0 473.0 1000.7 472.5 C1008.4 472.0 1020.1 468.9 1025.5 468.2 C1030.9 467.5 1031.0 467.8 1033.0 468.5 C1035.0 469.2 1037.7 471.0 1037.5 472.3 C1037.3 473.6 1036.8 474.7 1032.0 476.5 C1027.2 478.3 1017.7 480.8 1009.0 483.0 C1000.3 485.2 983.5 487.7 980.0 490.0 C976.5 492.3 986.0 495.2 988.0 497.0 C990.0 498.8 990.8 498.7 991.8 500.8 C992.8 502.9 994.1 506.0 994.2 509.5 C994.4 513.0 993.1 517.7 992.7 522.0 C992.3 526.3 992.6 531.3 991.8 535.5 C991.0 539.7 988.9 544.5 987.9 547.1 C986.9 549.7 985.4 549.4 986.0 551.0 C986.6 552.6 991.3 555.0 991.8 556.8 C992.3 558.6 990.8 561.3 988.9 561.6 C987.0 561.9 982.5 560.5 980.2 558.7 C978.0 556.9 978.1 552.5 975.4 551.0 C972.7 549.5 968.1 550.0 963.8 550.0 C959.4 550.0 953.0 549.2 949.3 551.0 C945.6 552.8 944.2 558.7 941.6 560.6 C939.0 562.5 935.4 563.1 933.9 562.6 C932.4 562.1 931.9 560.0 932.9 557.7 C933.9 555.4 939.4 552.7 939.7 549.0 C940.0 545.3 935.6 540.5 934.8 535.5 C934.0 530.5 934.6 524.2 934.8 519.1 C935.0 514.0 936.3 509.2 936.0 505.0 C935.7 500.8 937.4 496.8 933.0 494.0 C928.6 491.2 918.5 490.5 909.7 488.5 C900.9 486.5 886.6 483.8 880.0 482.0 C873.4 480.2 871.5 478.9 870.0 477.5 C868.5 476.1 869.0 474.7 871.0 473.5 C873.0 472.3 876.3 470.7 882.0 470.5 C887.7 470.3 897.3 471.9 905.0 472.5 C912.7 473.1 924.7 476.1 928.0 474.0 C931.3 471.9 926.1 464.0 924.8 459.6 C923.5 455.2 922.0 451.4 920.4 447.5 C918.8 443.6 917.1 439.7 914.9 436.4 C912.7 433.1 909.0 430.9 907.1 427.6 C905.2 424.3 904.0 421.2 903.3 416.6 C902.6 412.0 903.1 404.7 903.0 400.0 C902.9 395.3 902.3 391.9 902.5 388.6 C902.7 385.3 903.4 382.1 904.4 380.3Z" fill="#2ef02a"/>
<ellipse cx="911.6" cy="394" rx="5" ry="3.5" fill="#1faa1f" opacity="0.55"/>
<ellipse cx="994.3" cy="395.7" rx="5" ry="3.5" fill="#1faa1f" opacity="0.55"/>
<path d="M956.4 395.0 C961.7 394.9 967.4 395.8 972.0 396.5 C976.6 397.2 980.9 396.3 984.0 399.0 C987.1 401.7 989.6 407.8 990.8 412.6 C992.0 417.4 992.0 422.4 991.4 427.9 C990.8 433.4 989.1 439.8 987.3 445.5 C985.4 451.2 982.1 456.6 980.3 461.9 C978.5 467.2 978.4 472.5 976.7 477.2 C975.0 481.9 972.5 486.7 970.0 490.0 C967.5 493.3 965.3 495.7 962.0 497.0 C958.7 498.3 952.7 498.6 950.0 497.6 C947.3 496.6 947.2 494.4 945.6 491.0 C944.0 487.6 941.7 481.8 940.3 477.3 C938.9 472.8 938.5 468.6 937.0 464.0 C935.5 459.4 933.2 454.9 931.4 449.7 C929.6 444.5 927.1 438.5 926.0 433.0 C924.9 427.5 924.8 421.4 925.0 416.6 C925.2 411.8 925.0 407.3 927.5 404.0 C930.0 400.7 935.2 398.5 940.0 397.0 C944.8 395.5 951.1 395.1 956.4 395.0Z" fill="url(#yy)"/>
<path d="M943.5 501.5 C948.9 499.4 960.6 496.7 968.6 496.5 C976.6 496.3 987.5 498.2 991.8 500.5 C996.1 502.8 994.3 506.1 994.5 510.0 C994.7 513.9 993.6 520.3 993.0 524.0 C992.4 527.7 995.2 530.5 991.0 532.0 C986.8 533.5 975.8 533.2 968.0 533.0 C960.2 532.8 949.5 532.5 944.0 531.0 C938.5 529.5 936.2 527.7 935.0 524.0 C933.8 520.3 935.1 512.8 936.5 509.0 C937.9 505.2 938.1 503.6 943.5 501.5Z" fill="url(#hg)"/>
<path d="M962.2 478.5 L965.5 482 L968.4 485 L971.5 482 L974.6 478.5 L973.5 494 L963.5 494 Z" fill="#e766d8"/>
<path d="M956.8 494 H983.3 L981 496.5 H959 Z" fill="#d81a1a"/>
<circle cx="954.1" cy="536.5" r="9.1" fill="#fff"/>
<circle cx="956.1" cy="538" r="3.4" fill="#000"/>
<circle cx="982.6" cy="535.5" r="8.8" fill="#fff"/>
<circle cx="984.5" cy="537" r="3.3" fill="#000"/>
<path d="M869 475.5 L873 471 L876 474 Z M1033 469 L1037.5 472.5 L1034 475.5 Z" fill="#e8e030"/>
</g>
<g transform="translate(38 376) scale(0.3738) translate(-506 -253)"><use href="#frog"/></g>
<path d="M98.8 246.4 C99.1 245.8 101.0 246.8 102.0 247.2 C103.0 247.6 102.6 248.4 105.0 248.6 C107.4 248.8 114.2 248.9 116.5 248.6 C118.8 248.2 118.2 247.1 119.0 246.5 C119.8 245.9 121.1 244.9 121.3 245.2 C121.5 245.5 120.3 247.5 120.0 248.5 C119.7 249.5 119.4 249.0 119.4 251.0 C119.4 253.0 119.8 257.6 119.9 260.7 C120.0 263.8 119.7 267.8 119.9 269.5 C120.1 271.2 119.3 270.6 121.0 271.0 C122.7 271.4 127.0 271.4 130.0 271.6 C133.0 271.8 136.9 271.8 138.9 272.3 C140.9 272.8 142.2 274.0 142.2 274.8 C142.2 275.6 140.9 276.8 138.9 277.4 C136.9 278.0 132.8 277.9 130.0 278.2 C127.2 278.5 123.2 277.9 122.3 279.0 C121.4 280.1 123.9 283.2 124.8 285.0 C125.7 286.8 126.9 288.0 127.6 290.0 C128.3 292.0 129.0 295.0 129.1 297.2 C129.2 299.4 129.1 302.1 128.1 303.4 C127.1 304.7 124.5 303.7 123.2 305.0 C121.9 306.3 121.1 308.3 120.5 311.0 C119.9 313.7 120.3 319.2 119.8 321.4 C119.3 323.6 118.5 324.0 117.7 324.3 C116.9 324.6 115.9 324.7 115.0 323.4 C114.1 322.1 113.6 319.2 112.2 316.6 C110.8 314.0 108.4 309.5 106.7 307.6 C105.0 305.7 103.1 305.0 101.9 305.0 C100.8 305.0 100.7 307.5 99.8 307.8 C98.9 308.1 97.0 308.1 96.3 306.9 C95.6 305.7 95.6 303.5 95.6 300.7 C95.6 297.9 95.7 293.1 96.3 290.3 C96.9 287.5 98.1 285.8 99.0 284.0 C99.9 282.2 102.8 280.2 101.6 279.7 C100.4 279.2 95.0 280.6 92.0 281.0 C89.0 281.4 85.3 282.5 83.4 282.4 C81.5 282.3 80.9 281.4 80.6 280.5 C80.3 279.6 79.9 278.1 81.8 277.2 C83.7 276.3 88.3 275.8 92.0 275.0 C95.7 274.2 102.2 273.6 104.1 272.3 C106.0 271.0 103.9 269.2 103.3 267.3 C102.7 265.4 101.0 263.4 100.4 260.7 C99.9 258.0 100.3 253.4 100.0 251.0 C99.7 248.6 98.5 247.0 98.8 246.4Z" fill="#2ef02a"/>
<path d="M108.7 250.8 C109.0 247.9 113.7 247.9 114.5 250.8 C115.3 253.7 116.0 275.1 116.3 280.0 C116.6 284.9 117.5 296.1 117.8 300.0 C118.1 303.9 119.2 316.5 119.1 318.6 C119.0 320.7 117.3 321.0 117.0 321.0 C116.7 321.0 116.2 320.9 115.7 318.6 C115.2 316.3 112.8 301.9 112.4 298.0 C112.0 294.1 111.9 284.7 111.5 280.0 C111.1 275.3 108.4 253.7 108.7 250.8Z" fill="#f0f010"/>
</svg>

<!-- red arrow -->
<svg class="a" style="left:195px;top:120px" width="70" height="80" viewBox="195 120 70 80">
<path d="M214.5 142 L252.4 192.9" stroke="#e8141c" stroke-width="6.5" stroke-linecap="round"/>
<path d="M205.5 129.4 L209.4 146.5 L221 139.9Z" fill="#e8141c" stroke="#e8141c" stroke-width="1" stroke-linejoin="round"/>
</svg>

<!-- cursor -->
<svg class="a" style="left:210px;top:97px" width="16" height="22" viewBox="0 0 16 22">
<path d="M1.5 1.5 V17 L5 13.6 L7.8 19.8 L10.3 18.7 L7.6 12.6 L12.5 12.6 Z" fill="#fff" stroke="#222" stroke-width="1.1" stroke-linejoin="round"/>
</svg>
</body></html>
